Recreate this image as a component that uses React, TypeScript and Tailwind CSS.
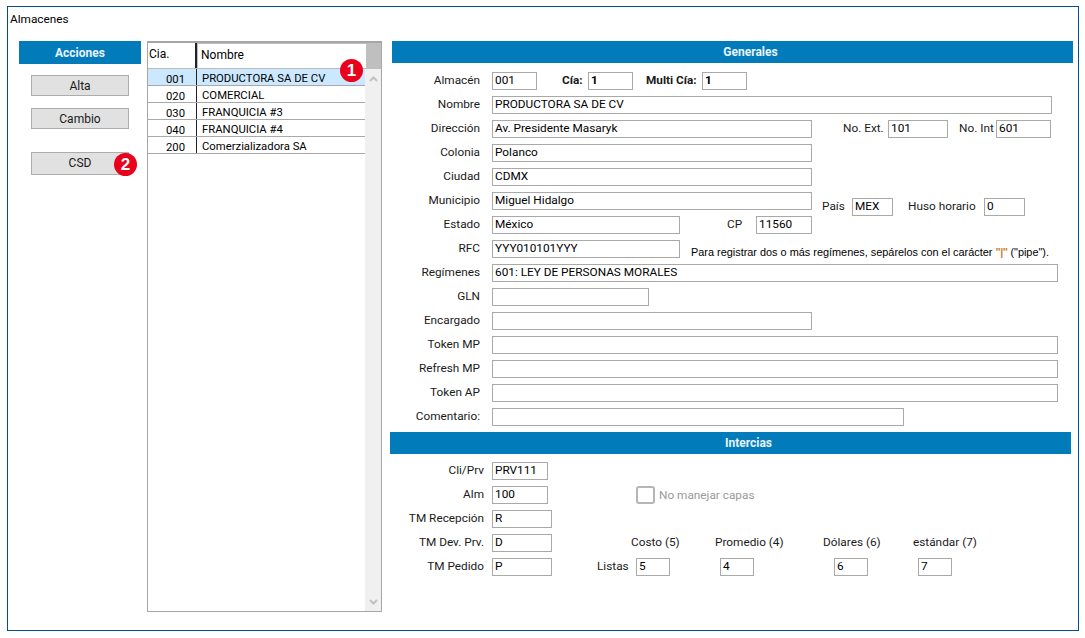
const rows = [
  { cia: "001", nombre: "PRODUCTORA SA DE CV", selected: true },
  { cia: "020", nombre: "COMERCIAL" },
  { cia: "030", nombre: "FRANQUICIA #3" },
  { cia: "040", nombre: "FRANQUICIA #4" },
  { cia: "200", nombre: "Comerzializadora SA" },
];

function SectionBar({ title }: { title: string }) {
  return (
    <div className="flex h-[22px] w-[681px] items-center justify-center bg-[#027bbb] pl-[36px] text-[12px] font-bold text-[#e8f3fa]">
      {title}
    </div>
  );
}

function Field({
  value = "",
  className = "",
  bold = false,
}: {
  value?: string;
  className?: string;
  bold?: boolean;
}) {
  return (
    <div
      className={`flex h-[18px] shrink-0 items-center border border-[#a9a9a9] bg-white pl-[2px] text-[11.8px] text-black ${
        bold ? "font-bold" : ""
      } ${className}`}
    >
      {value}
    </div>
  );
}

function Text({ children, className = "" }: { children: React.ReactNode; className?: string }) {
  return <div className={`shrink-0 whitespace-nowrap text-[11.8px] leading-[18px] text-[#1a1a1a] ${className}`}>{children}</div>;
}

function Row({
  label,
  children,
  labelClass = "-mt-[1px] mr-[12px] w-[88px]",
}: {
  label: string;
  children: React.ReactNode;
  labelClass?: string;
}) {
  return (
    <div className="flex h-[18px] items-start">
      <Text className={`text-right ${labelClass}`}>{label}</Text>
      {children}
    </div>
  );
}

const interLabel = "-mt-[1px] mr-[8px] w-[92px]";

function Badge({ n, className }: { n: number; className: string }) {
  return (
    <div
      className={`absolute flex h-[23px] w-[23px] items-center justify-center rounded-full bg-[#e8001c] font-['Liberation_Sans',sans-serif] text-[17px] font-bold text-white ${className}`}
    >
      {n}
    </div>
  );
}

function ActionButton({ label, className = "" }: { label: string; className?: string }) {
  return (
    <div
      className={`flex h-[21px] w-[98px] items-center justify-center border border-[#adadad] bg-[#e1e1e1] text-[12px] text-[#1a1a1a] ${className}`}
    >
      {label}
    </div>
  );
}

function Chevron({ up = false }: { up?: boolean }) {
  return (
    <svg width="9" height="6" viewBox="0 0 9 6" className="mx-auto">
      <path
        d={up ? "M1 5 L4.5 1.5 L8 5" : "M1 1 L4.5 4.5 L8 1"}
        fill="none"
        stroke="#c2c2c2"
        strokeWidth="2"
      />
    </svg>
  );
}

export default function App() {
  return (
    <div className="h-[638px] w-[1085px] overflow-hidden bg-white pl-[7px] pt-[6px] font-['Roboto',sans-serif]">
      <div className="h-[625px] w-[1072px] border border-[#00508f]">
        <div className="h-[34px] pl-[2px] pt-[4px] text-[11.8px] leading-[16px] text-black">Almacenes</div>

        <div className="flex items-start pl-[11px]">
          {/* Acciones */}
          <div className="relative w-[122px]">
            <div className="flex h-[23px] items-center justify-center bg-[#027bbb] text-[12px] font-bold text-[#e8f3fa]">
              Acciones
            </div>
            <div className="flex flex-col pl-[12px]">
              <ActionButton label="Alta" className="mt-[11px]" />
              <ActionButton label="Cambio" className="mt-[12px]" />
              <ActionButton label="CSD" className="mt-[23px] h-[23px] pb-[2px]" />
            </div>
            <Badge n={2} className="left-[95px] top-[112px]" />
          </div>

          {/* Lista de compañías */}
          <div className="relative ml-[6px] flex h-[571px] w-[235px] flex-col border border-t-2 border-[#a6a6a6] bg-white">
            <div className="flex h-[26px] shrink-0 border-b border-[#bdbdbd] bg-[#bfbfbf] text-[12px] text-black">
              <div className="w-[49px] border-r-2 border-[#222] bg-white pl-[1px] leading-[23px]">Cia.</div>
              <div className="ml-[1px] mt-[1px] w-[168px] bg-white pl-[3px] leading-[22px]">Nombre</div>
            </div>
            <div className="flex min-h-0 flex-1">
              <div className="w-[217px] shrink-0">
                {rows.map((r) => (
                  <div
                    key={r.cia}
                    className={`flex h-[17px] border-b border-[#a9a9a9] text-[11.3px] text-black ${
                      r.selected ? "bg-[#cce8ff]" : ""
                    }`}
                  >
                    <div className="w-[49px] border-r border-[#222] pr-[11px] pt-[2px] text-right leading-[17px]">{r.cia}</div>
                    <div className="pl-[5px] pt-[2px] leading-[15px]">{r.nombre}</div>
                  </div>
                ))}
              </div>
              <div className="flex flex-1 flex-col justify-between bg-[#f0f0f0] pb-[6px] pt-[7px]">
                <Chevron up />
                <Chevron />
              </div>
            </div>
            <Badge n={1} className="left-[192px] top-[16px]" />
          </div>

          {/* Formulario */}
          <div className="ml-[8px] w-[683px]">
            <div className="pl-[2px]">
              <SectionBar title="Generales" />
            </div>
            <div className="mt-[9px] flex flex-col gap-[6px] pl-[2px]">
              <Row label="Almacén">
                <Field value="001" className="w-[45px]" />
                <Text className="-mt-[1px] ml-[25px] mr-[8px] w-[18px] font-bold">Cía:</Text>
                <Field value="1" bold className="w-[45px]" />
                <Text className="-mt-[1px] ml-[13px] mr-[4px] w-[52px] font-bold">Multi Cía:</Text>
                <Field value="1" bold className="w-[45px]" />
              </Row>
              <Row label="Nombre">
                <Field value="PRODUCTORA SA DE CV" className="w-[560px]" />
              </Row>
              <Row label="Dirección">
                <Field value="Av. Presidente Masaryk" className="w-[320px]" />
                <Text className="-mt-[1px] ml-[31px] w-[45px]">No. Ext.</Text>
                <Field value="101" className="w-[60px]" />
                <Text className="-mt-[1px] ml-[11px] w-[37px]">No. Int</Text>
                <Field value="601" className="w-[55px]" />
              </Row>
              <Row label="Colonia">
                <Field value="Polanco" className="w-[320px]" />
              </Row>
              <Row label="Ciudad">
                <Field value="CDMX" className="w-[320px]" />
              </Row>
              <Row label="Municipio">
                <Field value="Miguel Hidalgo" className="w-[320px]" />
                <Text className="ml-[10px] mt-[5px] w-[30px]">País</Text>
                <Field value="MEX" className="mt-[6px] w-[41px]" />
                <Text className="ml-[15px] mt-[5px] w-[76px]">Huso horario</Text>
                <Field value="0" className="mt-[6px] w-[41px]" />
              </Row>
              <Row label="Estado">
                <Field value="México" className="w-[188px]" />
                <Text className="-mt-[1px] ml-[47px] w-[29px]">CP</Text>
                <Field value="11560" className="w-[56px]" />
              </Row>
              <Row label="RFC">
                <Field value="YYY010101YYY" className="w-[188px]" />
                <div className="ml-[11px] mt-[3px] whitespace-nowrap font-['Liberation_Sans',sans-serif] text-[10.9px] leading-[18px] text-black">
                  Para registrar dos o más regímenes, sepárelos con el carácter <span className="font-bold tracking-[-0.5px] text-[#c9832f]">"|"</span> ("pipe").
                </div>
              </Row>
              <Row label="Regímenes">
                <Field value="601: LEY DE PERSONAS MORALES" className="w-[566px]" />
              </Row>
              <Row label="GLN">
                <Field className="w-[157px]" />
              </Row>
              <Row label="Encargado">
                <Field className="w-[320px]" />
              </Row>
              <Row label="Token MP">
                <Field className="w-[566px]" />
              </Row>
              <Row label="Refresh MP">
                <Field className="w-[566px]" />
              </Row>
              <Row label="Token AP">
                <Field className="w-[566px]" />
              </Row>
              <Row label="Comentario:">
                <Field className="w-[412px]" />
              </Row>
            </div>

            <div className="mt-[6px]">
              <SectionBar title="Intercias" />
            </div>
            <div className="mt-[8px] flex flex-col gap-[6px] pl-[2px]">
              <Row label="Cli/Prv" labelClass={interLabel}>
                <Field value="PRV111" className="w-[56px]" />
              </Row>
              <Row label="Alm" labelClass={interLabel}>
                <Field value="100" className="w-[56px]" />
                <div className="ml-[88px] h-[18px] w-[19px] shrink-0 rounded-[3px] border-2 border-[#b5b5b5] bg-white" />
                <Text className="ml-[4px] text-[#9a9a9a]">No manejar capas</Text>
              </Row>
              <Row label="TM Recepción" labelClass={interLabel}>
                <Field value="R" className="w-[60px]" />
              </Row>
              <Row label="TM Dev. Prv." labelClass={interLabel}>
                <Field value="D" className="w-[60px]" />
                <Text className="-mt-[1px] ml-[79px] w-[84px]">Costo (5)</Text>
                <Text className="-mt-[1px] w-[108px]">Promedio (4)</Text>
                <Text className="-mt-[1px] w-[90px]">Dólares (6)</Text>
                <Text className="-mt-[1px]">estándar (7)</Text>
              </Row>
              <Row label="TM Pedido" labelClass={interLabel}>
                <Field value="P" className="w-[60px]" />
                <Text className="-mt-[1px] ml-[45px] w-[39px]">Listas</Text>
                <Field value="5" className="w-[34px]" />
                <Field value="4" className="ml-[50px] w-[34px]" />
                <Field value="6" className="ml-[80px] w-[34px]" />
                <Field value="7" className="ml-[50px] w-[34px]" />
              </Row>
            </div>
          </div>
        </div>
      </div>
    </div>
  );
}
